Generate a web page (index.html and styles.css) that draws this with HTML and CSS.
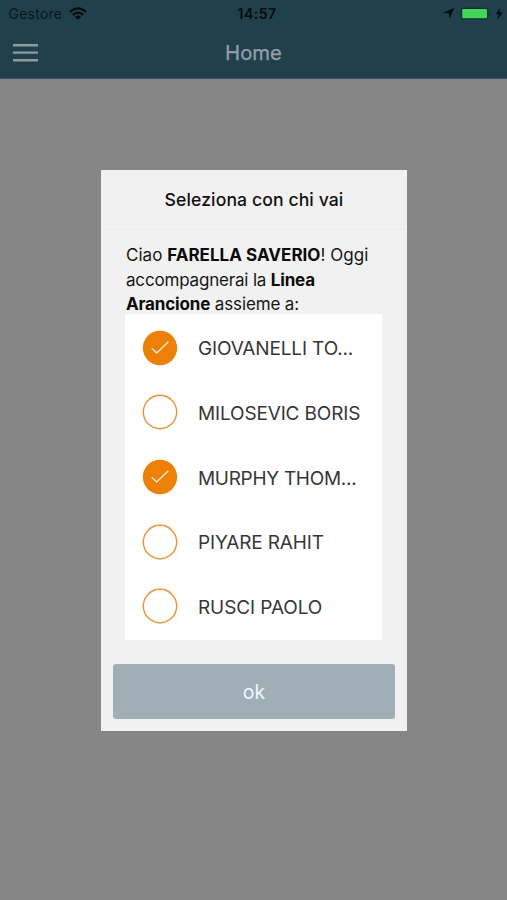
FILE: index.html
```html
<!DOCTYPE html>
<html lang="it">
<head>
<meta charset="utf-8">
<title>Home</title>
<link rel="stylesheet" href="styles.css">
</head>
<body>
<header class="header">
  <div class="status">
    <div class="carrier"><span>Gestore</span>
      <svg class="wifi" width="18" height="13" viewBox="0 0 18 13"><g fill="none" stroke="#020b0f" stroke-width="2.3"><path d="M1 4.9Q9-2.1 17 4.9"/><path d="M3.8 7.9Q9 3.4 14.2 7.9"/></g><path d="M9 12.7L5.9 9.7Q9 7.3 12.1 9.7Z" fill="#020b0f"/></svg>
    </div>
    <time class="clock">14:57</time>
    <div class="indicators">
      <svg width="64" height="14" viewBox="0 0 64 14"><path d="M-1.5 5.9L10.3 1L5.5 11.4L4.8 6.2Z" fill="#020b0f"/><rect x="17" y=".7" width="27.4" height="11.8" rx="2.4" fill="#102c30"/><rect x="18.2" y="2" width="24.8" height="9.3" rx="1" fill="#43d656"/><path d="M46.2 4.8Q48.2 6.5 46.2 8.2Z" fill="#102c30"/><path d="M56 .9L51.8 7.2H54.7L53.4 12.4L58.8 5.4H55.5Z" fill="#020b0f"/></svg>
    </div>
  </div>
  <nav class="navbar">
    <svg class="menu" width="25" height="20" viewBox="0 0 25 20"><path d="M0 2.2H25M0 9.6H25M0 17.2H25" stroke="#8f9a9f" stroke-width="2.4"/></svg>
    <h1>Home</h1>
  </nav>
</header>
<main class="backdrop">
  <section class="dialog">
    <h2>Seleziona con chi vai</h2>
    <div class="body">
      <p><span class="line l1">Ciao <b>FARELLA SAVERIO</b>! Oggi</span><span class="line l2">accompagnerai la <b>Linea</b></span><span class="line l3"><b>Arancione</b> assieme a:</span></p>
      <ul>
        <li><svg class="radio" viewBox="0 0 36 36"><circle cx="18" cy="18" r="17.2" fill="#ed8007"/><path d="M9.7 18.2L14.7 23L26.3 11.8" fill="none" stroke="#ffe6c8" stroke-width="1.5"/></svg><span class="n1">GIOVANELLI TO...</span></li>
        <li><svg class="radio" viewBox="0 0 36 36"><circle cx="18" cy="18" r="16.7" fill="#fff" stroke="#ee9238" stroke-width="1.4"/></svg><span class="n2">MILOSEVIC BORIS</span></li>
        <li><svg class="radio" viewBox="0 0 36 36"><circle cx="18" cy="18" r="17.2" fill="#ed8007"/><path d="M9.7 18.2L14.7 23L26.3 11.8" fill="none" stroke="#ffe6c8" stroke-width="1.5"/></svg><span class="n3">MURPHY THOM...</span></li>
        <li><svg class="radio" viewBox="0 0 36 36"><circle cx="18" cy="18" r="16.7" fill="#fff" stroke="#ee9238" stroke-width="1.4"/></svg><span class="n4">PIYARE RAHIT</span></li>
        <li><svg class="radio" viewBox="0 0 36 36"><circle cx="18" cy="18" r="16.7" fill="#fff" stroke="#ee9238" stroke-width="1.4"/></svg><span class="n5">RUSCI PAOLO</span></li>
      </ul>
    </div>
    <button>ok</button>
  </section>
</main>
</body>
</html>
```
FILE: styles.css
```css
* { box-sizing: border-box; }
body { margin: 0; height: 900px; display: flex; flex-direction: column; overflow: hidden; background: #868686; font-family: Inter, "Liberation Sans", sans-serif; }
.header { height: 79px; background: #20414c; border-bottom: 1px solid #375660; }
.status { height: 27px; display: grid; grid-template-columns: 1fr auto 1fr; align-items: center; color: #020b0f; font-size: 14px; line-height: 27px; }
.carrier { display: flex; align-items: center; gap: 7px; padding-left: 8.5px; color: #07171d; letter-spacing: .25px; }
.wifi { margin-top: -1px; }
.clock { font-weight: 600; font-size: 14px; letter-spacing: .45px; padding-left: 7px; }
.indicators { display: flex; justify-content: flex-end; padding-right: 2px; }
.indicators svg { margin-right: -3px; overflow: visible; }
.navbar { height: 51px; display: grid; grid-template-columns: 1fr auto 1fr; align-items: center; padding: 0 13px; }
h1 { margin: 0; color: #979fa6; font-size: 20.3px; font-weight: 400; -webkit-text-stroke: .25px #979fa6; }
.backdrop { flex: 1; padding: 91px 100px 0 101px; }
.dialog { height: 561px; background: #f1f1f1; padding-bottom: 12px; display: flex; flex-direction: column; }
h2 { height: 60px; margin: 0; border-bottom: 1px solid #ececec; color: #111; font-size: 17.6px; letter-spacing: .1px; font-weight: 500; line-height: 60px; text-align: center; }
.body { padding: 13px 25px 0 24px; }
p { margin: 0 0 0 1px; color: #161616; font-size: 17px; line-height: 24.5px; }
.line { display: block; white-space: nowrap; }
.l1 { letter-spacing: .03px; }
.l2 { letter-spacing: -.18px; }
.l3 { letter-spacing: -.15px; }
b { font-weight: 700; color: #0b0b0b; }
ul { list-style: none; margin: -2.5px 0 0; padding: 1.3px 0 0; height: 326px; background: #fff; }
li { height: 64.7px; display: flex; align-items: center; padding-left: 16.7px; gap: 20.3px; color: #373737; font-size: 19px; letter-spacing: -.15px; white-space: nowrap; }
.radio { width: 36px; height: 36px; flex: none; }
li span { padding-top: 2px; }
.n3 { letter-spacing: -.3px; }
.n5 { letter-spacing: -.1px; }
button { height: 55px; margin: auto 12px 0; border: 0; border-radius: 3px; background: #a0aeb6; color: #eef8ff; font: 400 19.5px Inter, sans-serif; padding: 1px 0 0; }
```
